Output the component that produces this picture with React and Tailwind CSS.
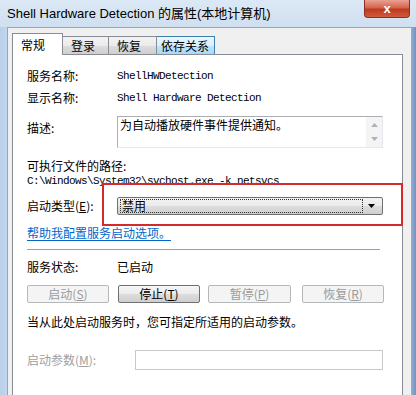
import React from "react";

const cjk = "font-['Microsoft_YaHei','Noto_Sans_CJK_SC',sans-serif]";
const mono = "font-['Liberation_Mono','Noto_Sans_CJK_SC',monospace]";

function Btn({ children, disabled, className = "" }) {
  return (
    <div
      className={
        "h-[18px] w-[82px] flex items-center justify-center rounded-[2px] border text-[12px] leading-none " +
        (disabled
          ? "border-[#b5b8bb] bg-[#f4f4f4] text-[#9a9a9a]"
          : "border-[#707070] bg-[linear-gradient(#f6f6f6,#ebebeb_50%,#dddddd_51%,#cfcfcf)] text-black") +
        " " +
        className
      }
    >
      {children}
    </div>
  );
}

export default function App() {
  return (
    <div className={"relative w-[416px] h-[395px] overflow-hidden bg-[linear-gradient(90deg,#b9d0ea,#c9daee_3%,#d8e5f3_50%,#c9daee_97%,#6f93c4)] " + cjk}>
      {/* title bar */}
      <div className="h-[27px] flex items-start bg-[linear-gradient(#dce8f5,#cfdff0)]">
        <div className="pl-[7px] pt-[5px] text-[13px] leading-[18px] text-black font-['Liberation_Sans','Noto_Sans_CJK_SC',sans-serif]">
          Shell Hardware Detection 的属性(本地计算机)
        </div>
        <div className="ml-auto mr-[6px] w-[46px] h-[18px] rounded-b-[4px] border border-t-0 border-[#8a2f22] bg-[linear-gradient(#e9a293,#d6634e_45%,#c0391f_55%,#cf5a3c)] flex items-center justify-center text-white text-[13px] font-bold leading-none font-['Liberation_Sans',sans-serif]">
          x
        </div>
      </div>

      <div className="flex h-[368px]">
        <div className="w-[7px] shrink-0" />
        {/* client area */}
        <div className="w-[404px] border-l border-t border-[#8fa7c4] bg-[#f0f0f0] pl-[4px] pt-[5px]">
          {/* tabs */}
          <div className="flex items-end h-[21px] text-[12px]">
            <div className="relative z-10 h-[22px] w-[51px] -mb-px border border-b-0 border-[#898c95] bg-white flex items-center pl-[8px] leading-none">
              常规
            </div>
            <div className="h-[18px] w-[46px] border border-l-0 border-b-0 border-[#898c95] bg-[linear-gradient(#f3f3f3,#ebebeb_50%,#dddddd_51%,#cfcfcf)] flex items-center pl-[8px] leading-none">
              登录
            </div>
            <div className="h-[18px] w-[48px] border border-l-0 border-b-0 border-[#898c95] bg-[linear-gradient(#f3f3f3,#ebebeb_50%,#dddddd_51%,#cfcfcf)] flex items-center pl-[8px] leading-none">
              恢复
            </div>
            <div className="h-[18px] w-[58px] border border-l-0 border-b-0 border-[#3c7fb1] bg-[linear-gradient(#eaf6fd,#d9f0fc_50%,#bee6fd_51%,#a7d9f5)] flex items-center pl-[4px] leading-none">
              依存关系
            </div>
          </div>

          {/* panel */}
          <div className="w-[391px] h-[360px] border border-[#898c95] bg-white pl-[14px] pt-[13px] text-[12px] text-black">
            <div className="flex h-[16px] items-center">
              <div className="w-[90px]">服务名称:</div>
              <div className={mono + " text-[11px] tracking-[-0.6px]"}>ShellHWDetection</div>
            </div>
            <div className="flex h-[16px] items-center mt-[6px]">
              <div className="w-[90px]">显示名称:</div>
              <div className={mono + " text-[11px] tracking-[-0.6px]"}>Shell Hardware Detection</div>
            </div>
            <div className="flex mt-[10px]">
              <div className="w-[90px] pt-[4px] leading-[16px]">描述:</div>
              <div className="w-[266px] h-[32px] border border-[#abadb3] border-r-[#e3e9ef] border-b-[#e3e9ef] flex">
                <div className="flex-1 pl-[2px] pt-[1px] leading-[14px]">为自动播放硬件事件提供通知。</div>
                <div className="w-[16px] bg-[#f4f4f4] flex flex-col items-center justify-between py-[6px]">
                  <svg width="7" height="4" viewBox="0 0 7 4"><path d="M0 4 L3.5 0 L7 4 Z" fill="#b0b0b0" /></svg>
                  <svg width="7" height="4" viewBox="0 0 7 4"><path d="M0 0 L3.5 4 L7 0 Z" fill="#b0b0b0" /></svg>
                </div>
              </div>
            </div>
            <div className="h-[16px] mt-[10px] flex items-center">可执行文件的路径:</div>
            <div className={mono + " h-[14px] flex items-center text-[11px] tracking-[-0.6px]"}>
              C:\Windows\System32\svchost.exe -k netsvcs
            </div>
            <div className="flex items-center mt-[9px]">
              <div className="w-[90px]">
                启动类型(<span className="underline">E</span>):
              </div>
              <div className="w-[266px] h-[18px] rounded-[2px] border border-[#707070] bg-[linear-gradient(#f2f2f2,#ebebeb_50%,#dddddd_51%,#cfcfcf)] flex items-center px-[2px]">
                <div className="flex-1 h-[14px] border border-dotted border-[#333] flex items-center pl-[1px] leading-none">
                  禁用
                </div>
                <div className="w-[17px] flex justify-center">
                  <svg width="7" height="4" viewBox="0 0 7 4"><path d="M0 0 L3.5 4 L7 0 Z" fill="#000" /></svg>
                </div>
              </div>
            </div>
            <div className="h-[16px] mt-[10px] flex items-center">
              <span className="text-[#0066cc] underline underline-offset-2">帮助我配置服务启动选项。</span>
            </div>
            <div className="w-[353px] mt-[8px] border-t border-b border-t-[#a0a0a0] border-b-white" />
            <div className="flex h-[16px] items-center mt-[8px]">
              <div className="w-[90px]">服务状态:</div>
              <div>已启动</div>
            </div>
            <div className="flex mt-[10px]">
              <Btn disabled>启动(<span className="underline">S</span>)</Btn>
              <Btn className="ml-[9px]">停止(<span className="underline">T</span>)</Btn>
              <Btn disabled className="ml-[8px] w-[83px]">暂停(<span className="underline">P</span>)</Btn>
              <Btn disabled className="ml-[11px] w-[81px]">恢复(<span className="underline">R</span>)</Btn>
            </div>
            <div className="h-[16px] mt-[11px] flex items-center">当从此处启动服务时，您可指定所适用的启动参数。</div>
            <div className="flex items-center mt-[20px]">
              <div className="w-[108px] text-[#a0a0a0]">
                启动参数(<span className="underline">M</span>):
              </div>
              <div className="w-[248px] h-[20px] border border-[#c9c9c9] bg-white" />
            </div>
          </div>
        </div>
      </div>

      {/* red annotation box */}
      <div className="absolute left-[102px] top-[183px] w-[301px] h-[43px] border-2 border-[#d42a2a]" />
    </div>
  );
}
